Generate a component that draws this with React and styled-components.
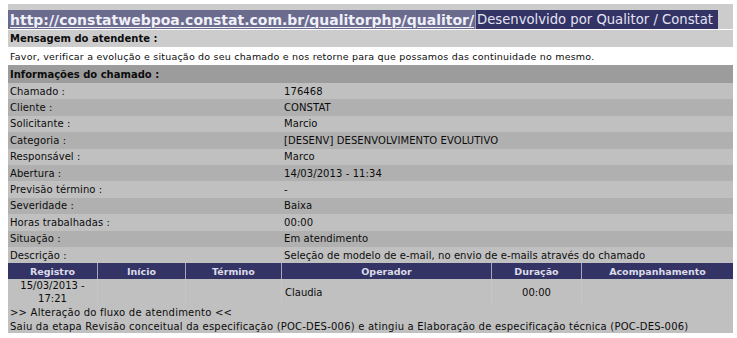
import styled, { createGlobalStyle } from "styled-components";

const GlobalStyle = createGlobalStyle`
  body {
    margin: 0;
    background: #ffffff;
    font-family: "DejaVu Sans", Verdana, sans-serif;
    color: #0c0c0c;
  }
`;

const Page = styled.div`
  width: 725px;
  padding: 4px 0 0 8px;
`;

const TopBand = styled.div`
  display: flex;
  background: #cccccc;
  padding-top: 6px;
  border-bottom: 1px solid #ffffff;
`;

const Header = styled.div`
  display: flex;
  align-items: center;
  width: 710px;
  height: 19px;
  background: #333366;
  color: #e4e4f2;
  white-space: nowrap;
`;

const Url = styled.span`
  height: 100%;
  display: flex;
  align-items: center;
  padding: 0 1px 0 2px;
  background: #6b6b8e;
  border-right: 1px solid #9a9ab4;
  font-size: 14px;
  font-weight: bold;
  color: #f0f0f8;
  text-decoration: underline;
  text-decoration-thickness: 1px;
  text-underline-offset: 2px;
`;

const Credit = styled.span`
  padding-left: 1px;
  font-size: 13.2px;
`;

const Bar = styled.div`
  height: ${(p) => p.$h || 17}px;
  display: flex;
  align-items: center;
  padding-left: 2px;
  background: ${(p) => p.$bg || "#cccccc"};
  font-size: ${(p) => p.$size || 10}px;
  font-weight: ${(p) => (p.$bold ? "bold" : "normal")};
  white-space: nowrap;
`;

const Message = styled(Bar)`
  background: #ffffff;
  letter-spacing: 0.2px;
  font-size: 9.5px;
`;

const InfoRow = styled.div`
  display: grid;
  grid-template-columns: 273px 1fr;
  height: 16.4px;
  align-items: center;
  background: ${(p) => (p.$dark ? "#b0b0b0" : "#c0c0c0")};
  font-size: 10px;
  letter-spacing: 0.08px;
  white-space: nowrap;
`;

const Label = styled.span`
  padding-left: 2px;
`;

const Value = styled.span`
  padding-left: 3px;
`;

const Grid = styled.div`
  display: grid;
  grid-template-columns: 89px 88px 96px 210px 90px 1fr;
`;

const Th = styled.div`
  height: 16px;
  display: flex;
  align-items: center;
  justify-content: center;
  background: #333366;
  color: #dcdce8;
  font-size: 9.5px;
  font-weight: bold;
  border-left: ${(p) => (p.$first ? "none" : "1px solid #a6a6c0")};
  white-space: nowrap;
`;

const Td = styled.div`
  min-height: 25px;
  display: flex;
  align-items: center;
  justify-content: ${(p) => (p.$left ? "flex-start" : "center")};
  padding-left: ${(p) => (p.$left ? 3 : 0)}px;
  text-align: center;
  line-height: 13px;
  background: #c0c0c0;
  font-size: 10px;
  border-left: ${(p) => (p.$first ? "none" : "1px solid #c6c6c6")};
`;

const Note = styled.div`
  height: 14px;
  display: flex;
  align-items: center;
  padding-left: 2px;
  background: #c0c0c0;
  font-size: 10px;
  letter-spacing: 0.22px;
  white-space: nowrap;
`;

const info = [
  ["Chamado :", "176468"],
  ["Cliente :", "CONSTAT"],
  ["Solicitante :", "Marcio"],
  ["Categoria :", "[DESENV] DESENVOLVIMENTO EVOLUTIVO"],
  ["Responsável :", "Marco"],
  ["Abertura :", "14/03/2013 - 11:34"],
  ["Previsão término :", "-"],
  ["Severidade :", "Baixa"],
  ["Horas trabalhadas :", "00:00"],
  ["Situação :", "Em atendimento"],
  ["Descrição :", "Seleção de modelo de e-mail, no envio de e-mails através do chamado"],
];

const columns = ["Registro", "Início", "Término", "Operador", "Duração", "Acompanhamento"];

export default function App() {
  return (
    <Page>
      <GlobalStyle />
      <TopBand>
        <Header>
          <Url>http://constatwebpoa.constat.com.br/qualitorphp/qualitor/</Url>
          <Credit>Desenvolvido por Qualitor / Constat</Credit>
        </Header>
      </TopBand>
      <Bar $bold>Mensagem do atendente :</Bar>
      <Message $h={18}>
        Favor, verificar a evolução e situação do seu chamado e nos retorne para que possamos das continuidade no mesmo.
      </Message>
      <Bar $bg="#9c9c9c" $h={18} $bold>
        Informações do chamado :
      </Bar>
      {info.map(([label, value], i) => (
        <InfoRow key={label} $dark={i % 2 === 1}>
          <Label>{label}</Label>
          <Value>{value}</Value>
        </InfoRow>
      ))}
      <Grid>
        {columns.map((c, i) => (
          <Th key={c} $first={i === 0}>
            {c}
          </Th>
        ))}
        <Td $first>
          15/03/2013 -<br />
          17:21
        </Td>
        <Td />
        <Td />
        <Td $left>Claudia</Td>
        <Td>00:00</Td>
        <Td />
      </Grid>
      <Note>&gt;&gt; Alteração do fluxo de atendimento &lt;&lt;</Note>
      <Note>
        Saiu da etapa Revisão conceitual da especificação (POC-DES-006) e atingiu a Elaboração de especificação técnica (POC-DES-006)
      </Note>
    </Page>
  );
}
